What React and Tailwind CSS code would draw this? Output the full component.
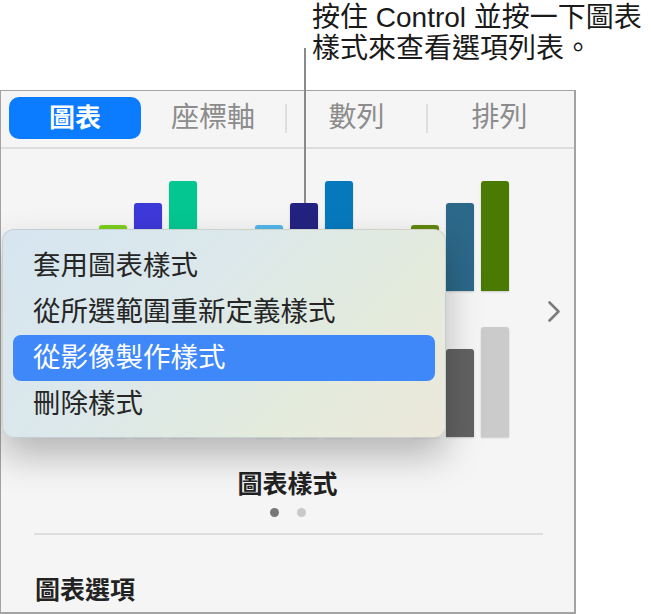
import React from 'react';

const FONT = "font-['Liberation_Sans','Noto_Sans_CJK_TC',sans-serif]";

// bar heights are shared by every thumbnail, only colours change
const HEIGHTS = [66, 88, 110];

const ROW_ONE = [
  ['bg-[#7ccf1d]', 'bg-[#3d38d8]', 'bg-[#04c690]'],
  ['bg-[#52b5ea]', 'bg-[#232280]', 'bg-[#0679bd]'],
  ['bg-[#5f870e]', 'bg-[#2c6889]', 'bg-[#4a7a02]'],
];

const ROW_TWO = [
  ['bg-[#9a9a9a]', 'bg-[#777777]', 'bg-[#b5b5b5]'],
  ['bg-[#8d8d8d]', 'bg-[#6a6a6a]', 'bg-[#c2c2c2]'],
  ['bg-[#8f8f8f]', 'bg-[#626262]', 'bg-[#cbcbcb]'],
];

function Thumb({ colors }) {
  return (
    <div className="flex items-end gap-[7px] h-[111px] w-[98px]">
      {colors.map((c, i) => (
        <div
          key={i}
          className={`w-[28px] rounded-t-[3px] shadow-[0_1px_2px_rgba(0,0,0,0.18)] ${c}`}
          style={{ height: HEIGHTS[i] }}
        />
      ))}
    </div>
  );
}

function ContextMenu() {
  const items = ['套用圖表樣式', '從所選範圍重新定義樣式', '從影像製作樣式', '刪除樣式'];
  return (
    <div className="absolute left-[2px] top-[229px] w-[444px] h-[209px] rounded-[12px] border border-black/10 bg-[linear-gradient(135deg,#d6e5f1_0%,#dce8ea_40%,#e3ebdd_70%,#ece8da_100%)] shadow-[0_18px_36px_rgba(0,0,0,0.26)] pt-[13px] px-[10px]">
      {items.map((t, i) => (
        <div
          key={t}
          className={`h-[46px] flex items-center pl-[20px] rounded-[8px] text-[27.5px] ${
            i === 2 ? 'bg-[#3f88fa] text-white' : 'text-[#262626]'
          }`}
        >
          {t}
        </div>
      ))}
    </div>
  );
}

export default function App() {
  return (
    <div className={`relative w-[651px] h-[614px] bg-white overflow-hidden ${FONT}`}>
      {/* callout */}
      <div className="pl-[312px] pt-[2px] text-[28px] leading-[31px] text-[#1a1a1a] h-[90px]">
        <div className="whitespace-nowrap">按住 Control 並按一下圖表</div>
        <div className="whitespace-nowrap">樣式來查看選項列表。</div>
      </div>

      {/* inspector panel */}
      <div className="w-[576px] h-[524px] border-2 border-t border-l border-[#a3a3a3] bg-[#f5f5f5] overflow-hidden">
        <div className="flex items-start pl-[8px] pt-[6px] h-[56px]">
          <div className="w-[132px] h-[42px] rounded-[10px] bg-[#0b7bff] text-white text-[26px] font-semibold flex items-center justify-center">
            圖表
          </div>
          <div className="w-[144px] h-[42px] flex items-center justify-center text-[28px] text-[#8c8c8c]">座標軸</div>
          <div className="w-[2px] h-[29px] mt-[7px] bg-[#dedede]" />
          <div className="w-[139px] h-[42px] flex items-center justify-center text-[28px] text-[#8c8c8c]">數列</div>
          <div className="w-[2px] h-[29px] mt-[7px] bg-[#dedede]" />
          <div className="w-[143px] h-[42px] flex items-center justify-center text-[28px] text-[#8c8c8c]">排列</div>
        </div>
        <div className="h-[2px] bg-[#dddddd]" />

        {/* chart styles */}
        <div className="flex pl-[98px] pt-[31px]">
          <div className="flex flex-col gap-[35px]">
            <div className="flex gap-[58px]">
              {ROW_ONE.map((c, i) => <Thumb key={i} colors={c} />)}
            </div>
            <div className="flex gap-[58px]">
              {ROW_TWO.map((c, i) => <Thumb key={i} colors={c} />)}
            </div>
          </div>
          <svg className="ml-[38px] mt-[120px]" width="14" height="23" viewBox="0 0 14 23" fill="none">
            <path d="M2.5 2.5 L11.5 11.5 L2.5 20.5" stroke="#7b7b7b" strokeWidth="2.6" strokeLinecap="round" strokeLinejoin="round" />
          </svg>
        </div>

        <div className="mt-[31px] text-center text-[25px] leading-[32px] font-bold text-[#222]">圖表樣式</div>
        <div className="flex justify-center gap-[18px] mt-[8px]">
          <div className="w-[9px] h-[9px] rounded-full bg-[#777777]" />
          <div className="w-[9px] h-[9px] rounded-full bg-[#c9c9c9]" />
        </div>
        <div className="ml-[33px] w-[509px] h-[2px] mt-[16px] bg-[#dedede]" />
        <div className="ml-[34px] mt-[39px] text-[25px] leading-[32px] font-bold text-[#222]">圖表選項</div>
      </div>

      <ContextMenu />

      {/* leader line */}
      <div className="absolute left-[304px] top-[48px] w-[2px] h-[155px] bg-[#8a8a8a]" />
    </div>
  );
}
